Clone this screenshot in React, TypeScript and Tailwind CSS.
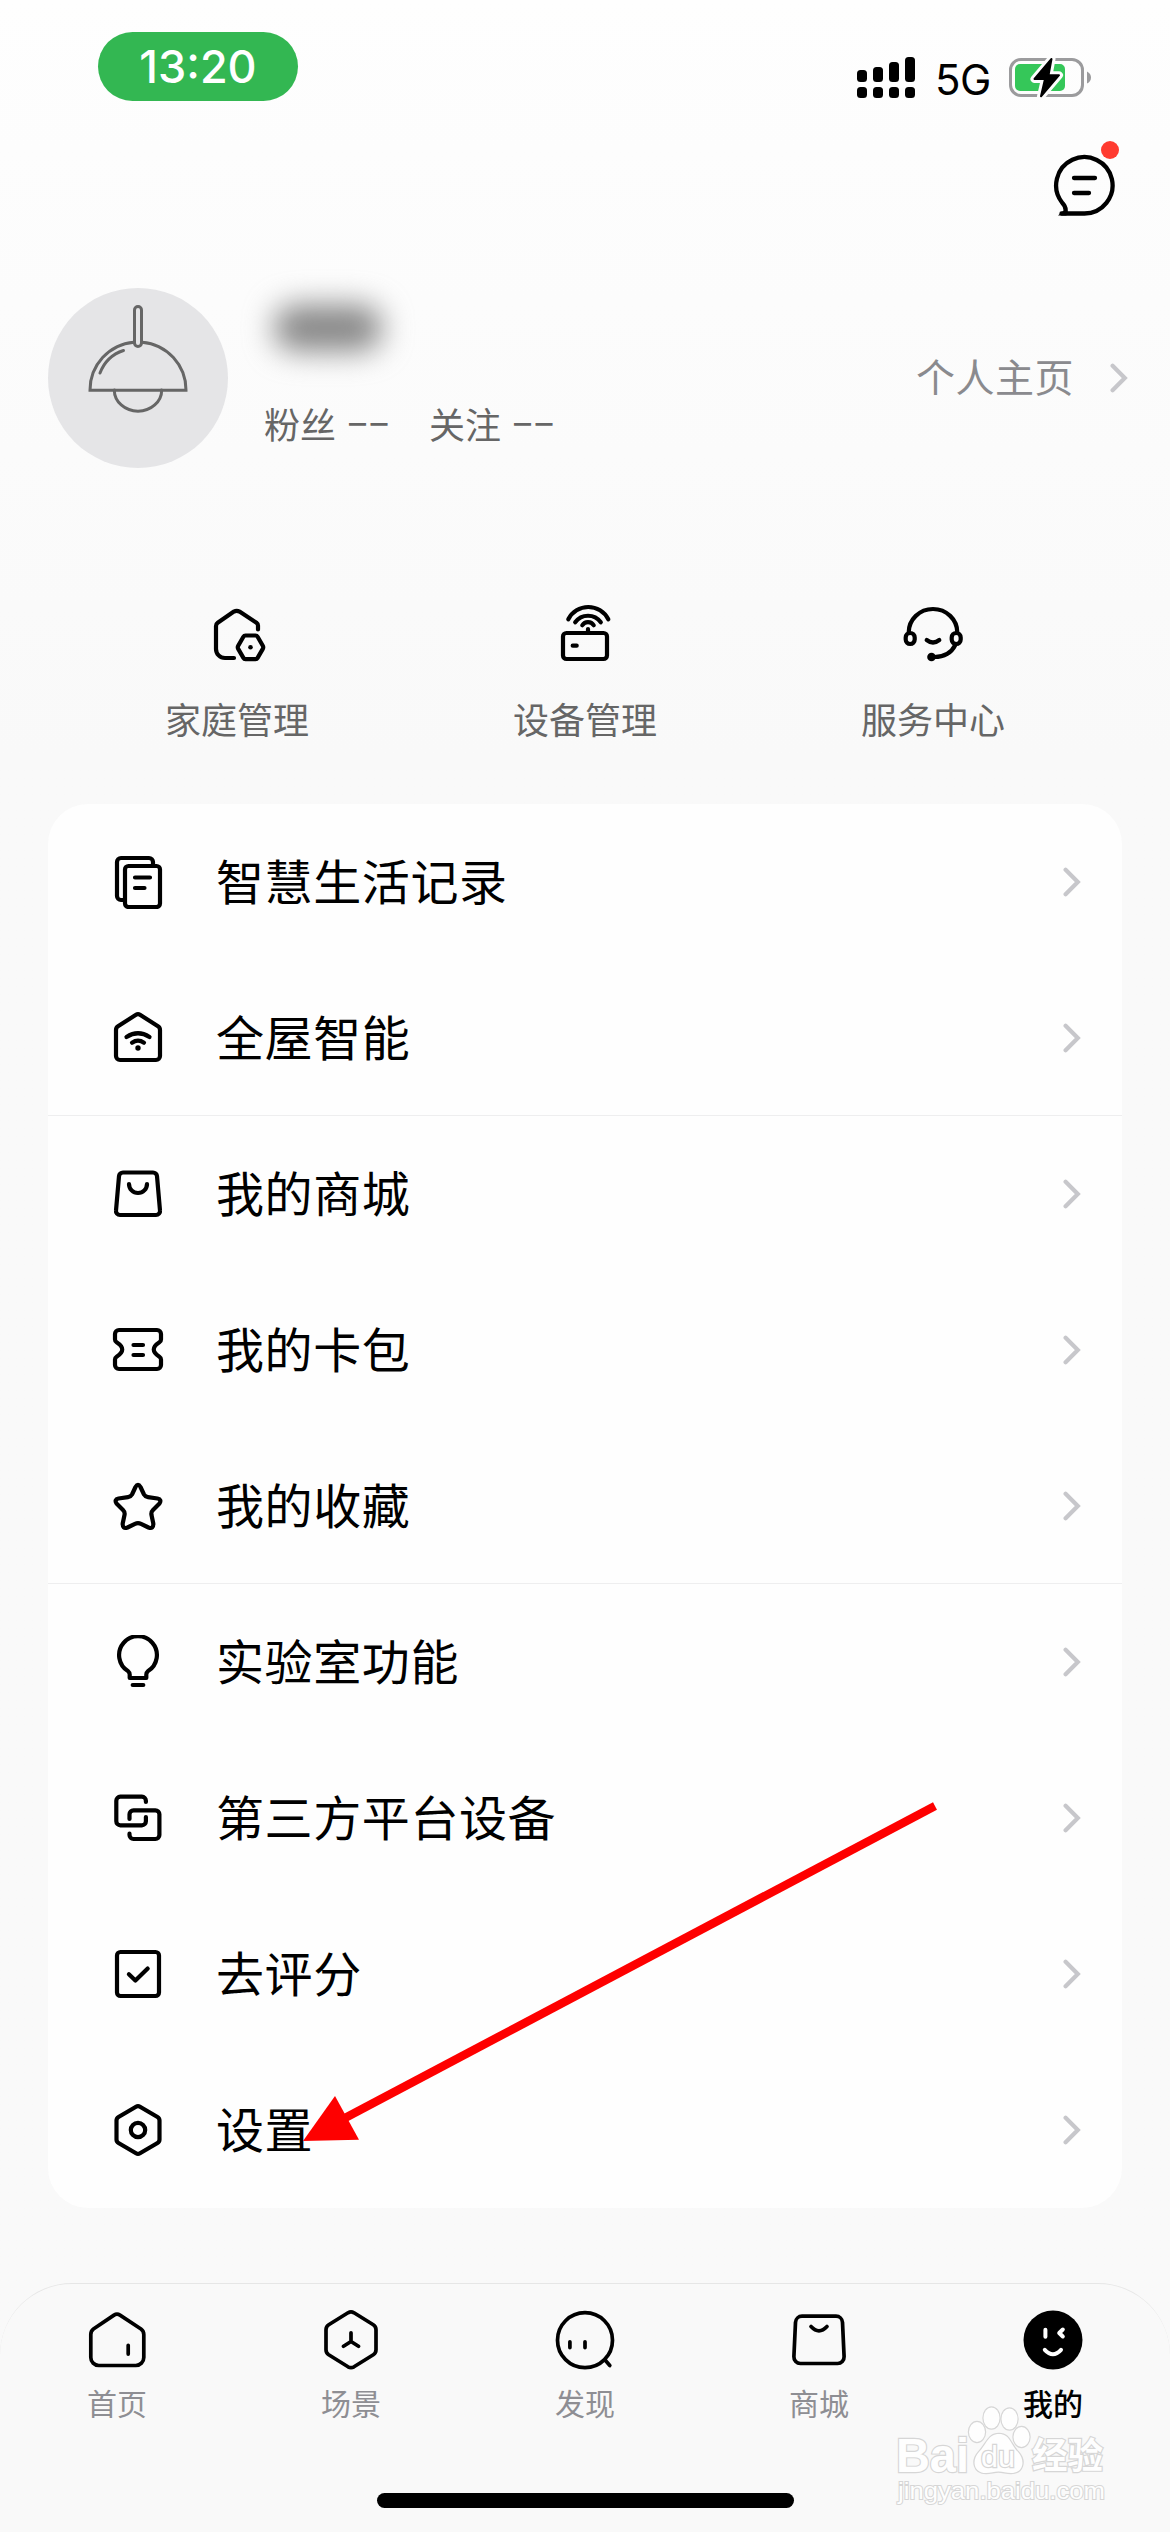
import type { ReactNode } from "react";

type IconProps = { children: ReactNode; box: number; stroke?: number; className?: string };

function Icon({ children, box, stroke = 4.2, className }: IconProps) {
  return (
    <svg
      width={box}
      height={box}
      viewBox={`0 0 ${box} ${box}`}
      fill="none"
      stroke="currentColor"
      strokeWidth={stroke}
      strokeLinecap="round"
      strokeLinejoin="round"
      className={className}
    >
      {children}
    </svg>
  );
}

function Chevron() {
  return (
    <svg width="18" height="30" viewBox="0 0 18 30" fill="none" stroke="#c7c7cb" strokeWidth="4.2" strokeLinecap="round">
      <path d="M2.6 2.8 14.8 15 2.6 27.2" />
    </svg>
  );
}

const quick = [
  {
    label: "家庭管理",
    icon: (
      <Icon box={60}>
        <path d="M51 26.5V22.5q0-1.6-1.5-2.7L32.5 8.6q-2.8-1.6-5.6 0L10.7 19.8Q9 21 9 23v23a9 9 0 0 0 9 9h9" />
        <path d="M38.5 32.5h10q1.4 0 2.1 1.2l5.2 9q.9 1.6 0 3.2l-5.2 9q-.7 1.2-2.1 1.2h-10q-1.4 0-2.1-1.2l-5.2-9q-.9-1.6 0-3.2l5.2-9q.7-1.2 2.1-1.2z" />
        <circle cx="43.5" cy="44.3" r="2.3" fill="currentColor" stroke="none" />
      </Icon>
    ),
  },
  {
    label: "设备管理",
    icon: (
      <Icon box={60}>
        <rect x="8" y="30" width="44" height="26" rx="3.5" />
        <path d="M17.7 42.7h4M33 26v4" />
        <path d="M13.3 16.3a22.4 22.4 0 0 1 40 0M20.2 19.3a15.8 15.8 0 0 1 25.6 0M27.3 22.3a6.6 6.6 0 0 1 11.4 0" />
      </Icon>
    ),
  },
  {
    label: "服务中心",
    icon: (
      <Icon box={60}>
        <rect x="2.7" y="30" width="9" height="11" rx="4.5" />
        <rect x="48.7" y="30" width="9" height="11" rx="4.5" />
        <path d="M5.7 29.5a24.3 23.5 0 0 1 48.6 0M52.3 42q-6 12-21 12M23.7 37q6.3 5 12.6 0" />
        <circle cx="28.5" cy="54" r="4.3" fill="currentColor" stroke="none" />
      </Icon>
    ),
  },
];

const groups = [
  [
    {
      label: "智慧生活记录",
      icon: (
        <>
          <rect x="14" y="11" width="35" height="41" rx="3.5" />
          <path d="M42 9V7a4 4 0 0 0-4-4H10a4 4 0 0 0-4 4v34a4 4 0 0 0 4 4h3M24 22.5h15M24 33h9.5" />
        </>
      ),
    },
    {
      label: "全屋智能",
      icon: (
        <>
          <path d="M25 3.8q2-1.3 4 0l18 11.4q2 1.3 2 3.8v26a4 4 0 0 1-4 4H9a4 4 0 0 1-4-4V19q0-2.5 2-3.8z" />
          <path d="M15.5 26q11.5-7.5 23 0M21 31.7q6-4 12 0" />
          <circle cx="27" cy="37" r="2.7" fill="currentColor" stroke="none" />
        </>
      ),
    },
  ],
  [
    {
      label: "我的商城",
      icon: (
        <>
          <path d="M12 5.5h30a4 4 0 0 1 4 3.7l3 34.3a4 4 0 0 1-4 4.5H9a4 4 0 0 1-4-4.5L8 9.2a4 4 0 0 1 4-3.7z" />
          <path d="M18 17a9 9 0 0 0 18 0" />
        </>
      ),
    },
    {
      label: "我的卡包",
      icon: (
        <path d="M8 7h38a4 4 0 0 1 4 4v5.5q0 1.8-1.600 2.800c-7.500 4.800-7.500 9.600 0 14.400q1.600 1 1.600 2.800V42a4 4 0 0 1-4 4H8a4 4 0 0 1-4-4v-5.500q0-1.800 1.600-2.800c7.500-4.800 7.500-9.600 0-14.400Q4 18.300 4 16.500V11a4 4 0 0 1 4-4zM22.500 22h9.500M22.500 32h9.500" />
      ),
    },
    {
      label: "我的收藏",
      icon: (
        <path d="M24.5 8Q27 3.5 29.5 8L33 15.5Q34.3 17.8 37 18.2L46.5 19.5Q51 20.5 48.5 24.5L42 31Q40 33 40.4 35.5L42.3 44.5Q42.6 50.5 37.5 48.5L30 44.8Q27 43.3 24 44.8L16.5 48.5Q11.4 50.5 11.7 44.5L13.6 35.5Q14 33 12 31L5.5 24.5Q3 20.5 7.5 19.5L17 18.2Q19.7 17.8 21 15.5Z" />
      ),
    },
  ],
  [
    {
      label: "实验室功能",
      icon: <path d="M18.7 43v-3.5q0-2-1.5-3.2A18.900 18.900 0 1 1 36.800 36.300q-1.500 1.200-1.500 3.200V43zM21.700 50h10.600" />,
    },
    {
      label: "第三方平台设备",
      icon: (
        <path d="M34.9 11V9.7a4 4 0 0 0-4-4H9.3a4 4 0 0 0-4 4v20.600a4 4 0 0 0 4 4h21.600a4 4 0 0 0 4-4V26M18.500 28v-4.700a4 4 0 0 1 4-4h21.900a4 4 0 0 1 4 4V44a4 4 0 0 1-4 4H22.500a4 4 0 0 1-4-4v-1.300" />
      ),
    },
    {
      label: "去评分",
      icon: (
        <>
          <rect x="6" y="5" width="42" height="44" rx="3.5" />
          <path d="M17.9 27.3l6.5 6.3L36.7 21.6" />
        </>
      ),
    },
    {
      label: "设置",
      icon: (
        <>
          <path d="M25 3.7q2-1.2 4 0L46.500 14q2 1.200 2 3.500v19q0 2.300-2 3.500L29 50.300q-2 1.200-4 0L7.500 40q-2-1.200-2-3.500v-19q0-2.300 2-3.500z" />
          <circle cx="27" cy="27" r="7.2" />
        </>
      ),
    },
  ],
];

const tabs = [
  {
    label: "首页",
    icon: (
      <Icon box={60} stroke={3.7}>
        <path d="M27 5.1q3-1.900 6 0L54 19q2.800 2 2.800 5.500V47.500a8 8 0 0 1-8 8h-37a8 8 0 0 1-8-8v-23Q3.800 21 6.400 19zM41.200 35.300v8.800" />
      </Icon>
    ),
  },
  {
    label: "场景",
    icon: (
      <Icon box={60} stroke={3.7}>
        <path d="M27 2.8q3-1.700 6 0l19.300 12q2.700 1.700 2.700 5v20q0 3.300-2.700 5L33 56.800q-3 1.700-6 0l-19.300-12Q5 43 5 39.800v-20q0-3.300 2.700-5zM30 22.800v8.700l-7.500 4.800M30 31.500l7.500 4.800" />
      </Icon>
    ),
  },
  {
    label: "发现",
    icon: (
      <Icon box={60} stroke={3.7}>
        <circle cx="30" cy="30.2" r="27.5" />
        <path d="M14.9 31.8v5.8M30 31.8v5.8M50.5 50.5l4.3 5" />
      </Icon>
    ),
  },
  {
    label: "商城",
    icon: (
      <Icon box={60} stroke={3.7}>
        <path d="M13 6.2h34a6.500 6.500 0 0 1 6.500 6.200l1.600 34.300a6.500 6.500 0 0 1-6.500 6.800H11.400a6.500 6.500 0 0 1-6.500-6.800L6.500 12.400A6.500 6.500 0 0 1 13 6.200zM22 16.500q8 8.600 16 0" />
      </Icon>
    ),
  },
  {
    label: "我的",
    active: true,
    icon: (
      <Icon box={60} stroke={4}>
        <circle cx="30" cy="30" r="29.5" fill="#000" stroke="none" />
        <path stroke="#fff" d="M22.4 19.7v7M39.8 19.500l-3.600 3.500 3.600 3.500M21.800 39.800q8.100 8.800 16.200 0" />
      </Icon>
    ),
  },
];

function StatusBar() {
  return (
    <header className="flex h-[132px] items-start justify-between pt-8 pr-[77px] pl-[98px]">
      <div className="flex h-[69px] w-[200px] items-center justify-center rounded-[35px] bg-[#33b752] font-['Inter'] text-[45px] font-medium text-white">
        13:20
      </div>
      <div className="mt-[25px] flex h-[41px] items-start">
        <svg width="58" height="41" viewBox="0 0 58 41">
          <rect x="0" y="13" width="10" height="12" rx="3.5" />
          <rect x="16" y="10" width="10" height="15" rx="3.5" />
          <rect x="32" y="5" width="10" height="20" rx="3.5" />
          <rect x="48" y="0" width="10" height="25" rx="3.5" />
          <rect x="0" y="30" width="10" height="11" rx="3.5" />
          <rect x="16" y="30" width="10" height="11" rx="3.5" />
          <rect x="32" y="30" width="10" height="11" rx="3.5" />
          <rect x="48" y="30" width="10" height="11" rx="3.5" />
        </svg>
        <span className="mt-0.5 ml-5 w-[54px] text-center font-['Inter'] text-[42px] leading-[41px] tracking-[-0.5px]">5G</span>
        <svg width="84" height="41" viewBox="0 0 84 41" className="ml-[20px]">
          <rect x="1.5" y="2.5" width="72" height="36" rx="10.5" fill="none" stroke="#9b9b9d" strokeWidth="3" />
          <rect x="6" y="7" width="50" height="27" rx="5" fill="#35c759" />
          <path d="M78 14.500q4 2 4 6t-4 6z" fill="#9b9b9d" />
          <path
            d="M42.500 2 25.500 22h10.500L32 39.300 50 18.200H39.500z"
            fill="#000"
            stroke="#fdfdfd"
            strokeWidth="8"
            strokeLinejoin="round"
          />
          <path d="M42.500 2 25.500 22h10.500L32 39.300 50 18.200H39.500z" fill="#000" stroke="#000" strokeWidth="2" strokeLinejoin="round" />
        </svg>
      </div>
    </header>
  );
}

function Dashes() {
  return <span className="ml-[13px] w-[44px] font-['Inter'] text-[34px] leading-[54px] tracking-[4.5px]">––</span>;
}

function Profile() {
  return (
    <section className="flex h-[180px] items-center pr-[42px] pl-12">
      <div className="h-[180px] w-[180px] rounded-full bg-[#e5e5e7]">
        <svg width="180" height="180" viewBox="0 0 180 180" fill="none" stroke="#666" strokeWidth="3" strokeLinecap="round">
          <path d="M86.500 55V22a3.500 3.500 0 0 1 7 0V55a3.500 3.500 0 0 1-7 0z" />
          <path d="M94 54.200a48 48 0 0 1 44 48H42a48 48 0 0 1 44-48" />
          <path d="M52 85q6.500-17 23.500-22.500M66.300 102a23.700 21.200 0 0 0 47.400 0" />
        </svg>
      </div>
      <div className="flex h-full flex-1 flex-col pl-9">
        <div className="flex h-[98px] w-[128px] items-center justify-center pb-[18px]">
          <span className="h-[46px] w-[108px] rounded-[22px] bg-[#868686] blur-[15px]" />
        </div>
        <div className="flex items-center pt-2.5 text-[36px] leading-[54px] text-[#666]">
          <span>粉丝</span>
          <Dashes />
          <span className="ml-[36px]">关注</span>
          <Dashes />
        </div>
      </div>
      <div className="flex items-center gap-9 text-[39px] leading-[56px] text-[#8a8a8e]">
        <span className="-mt-1.5 tracking-[0.5px]">个人主页</span>
        <Chevron />
      </div>
    </section>
  );
}

function Watermark() {
  return (
    <svg
      width="220"
      height="110"
      viewBox="0 0 220 110"
      className="pointer-events-none absolute right-[59px] bottom-[20px] font-['Liberation_Sans','Noto_Sans_CJK_SC',sans-serif]"
      fill="#fefefe"
      stroke="#d6d6d6"
      strokeWidth="2.4"
      paintOrder="stroke"
    >
      <text x="5" y="70" fontSize="48" fontWeight="700" textLength="73" lengthAdjust="spacingAndGlyphs">Bai</text>
      <ellipse cx="86" cy="30" rx="8" ry="10" />
      <ellipse cx="100.500" cy="16" rx="8" ry="10.500" />
      <ellipse cx="118.500" cy="17" rx="8" ry="10.500" />
      <ellipse cx="130.500" cy="35" rx="8" ry="10" />
      <path d="M108 32c11 0 11 10 19 18 8 9 5 21-7 21-5 0-8-1.500-12.500-1.500S100 71 95 71c-12 0-15-12-7-21 8-8 9-18 20-18z" />
      <text x="90" y="65" fontSize="30" textLength="34" lengthAdjust="spacingAndGlyphs">du</text>
      <text x="141" y="67" fontSize="36" fontWeight="700" textLength="71" lengthAdjust="spacingAndGlyphs">经验</text>
      <text x="7" y="97" fontSize="24" strokeWidth="2" textLength="207" lengthAdjust="spacingAndGlyphs">jingyan.baidu.com</text>
    </svg>
  );
}

export default function App() {
  return (
    <div className="relative flex h-[2532px] w-[1170px] flex-col overflow-hidden bg-[#f9f9f9] bg-linear-to-b from-[#fefefe] from-0% via-[#f9f9f9] via-30% to-[#f9f9f9] font-['Noto_Sans_CJK_SC',sans-serif] text-black">
      <StatusBar />
      <div className="flex h-[156px] justify-end pt-5 pr-[52px]">
        <div className="relative h-[66px] w-[66px]">
          <Icon box={66} stroke={4.3}>
            <path d="M9.500 61.500H32.500A28.200 28.200 0 1 0 10 50.500Q14.500 55 13.500 60" />
            <path d="M22 26h21M22 41h15" />
            <path d="M6 63.600 14.500 56v7.600z" fill="currentColor" stroke="none" />
          </Icon>
          <span className="absolute -top-[11px] -right-px h-[18px] w-[18px] rounded-full bg-[#ff3b30]" />
        </div>
      </div>
      <Profile />
      <nav className="grid h-[336px] grid-cols-3 px-[63px] pt-[135px]">
        {quick.map((item) => (
          <div key={item.label} className="flex flex-col items-center">
            {item.icon}
            <span className="mt-7 text-[36px] leading-[54px] text-[#666]">{item.label}</span>
          </div>
        ))}
      </nav>
      <main className="mx-12 flex flex-col overflow-hidden rounded-[40px] bg-[#fefefe]">
        {groups.map((group, i) => (
          <section key={i} className="relative">
            {group.map((row) => (
              <div key={row.label} className="flex h-[156px] items-center pr-[41px] pl-[63px]">
                <Icon box={54}>{row.icon}</Icon>
                <span className="-mt-1.5 ml-[51px] flex-1 text-[48px] leading-[72px] tracking-[0.6px]">{row.label}</span>
                <Chevron />
              </div>
            ))}
            {i < groups.length - 1 && <div className="absolute inset-x-0 bottom-0 h-px bg-[#eeeeef]" />}
          </section>
        ))}
      </main>
      <footer className="mt-[75px] flex flex-1 flex-col items-center rounded-t-[72px] border-t border-[#e6e6e6] bg-[#f9f9f9] pt-[26px]">
        <div className="grid w-full grid-cols-5">
          {tabs.map((tab) => (
            <div key={tab.label} className="flex flex-col items-center">
              {tab.icon}
              <span
                className={
                  tab.active
                    ? "mt-2.5 text-[30px] leading-[44px] font-medium text-black"
                    : "mt-2.5 text-[30px] leading-[44px] text-[#8e8e93]"
                }
              >
                {tab.label}
              </span>
            </div>
          ))}
        </div>
        <div className="mt-[69px] h-[15px] w-[417px] rounded-full bg-black" />
      </footer>
      <svg width="640" height="360" viewBox="300 1795 640 360" className="pointer-events-none absolute top-[1795px] left-[300px]">
        <path d="M345 2118 935 1806" stroke="#fe0000" strokeWidth="8.5" />
        <path d="M303 2141 335 2096 359 2139.700z" fill="#fe0000" />
      </svg>
      <Watermark />
    </div>
  );
}
